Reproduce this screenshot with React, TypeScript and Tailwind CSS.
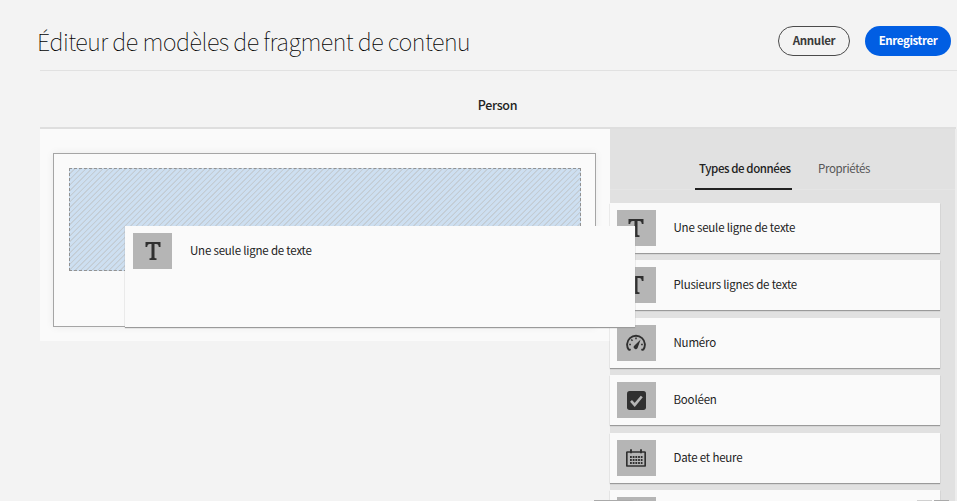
import React from "react";

const sans = "font-['Noto_Sans_CJK_SC','Noto_Sans',sans-serif]";

function TextIcon() {
  return (
    <svg width="16" height="18" viewBox="0 0 16 18" fill="#303030">
      <path d="M.5 0h15v5h-1.700c-.2-2.100-.8-3-2.600-3H9.500v13.200c0 .8.400 1 2 1V18h-7v-1.800c1.600 0 2-.2 2-1V2H4.800C3 2 2.400 2.900 2.200 5H.5z" />
    </svg>
  );
}

function GaugeIcon() {
  return (
    <svg width="20" height="18" viewBox="0 0 20 18" fill="none" stroke="#303030">
      <path d="M3 16.200A8.900 8.900 0 1 1 17 16.200M3 16.200l1.600-1M17 16.200l-1.600-1" strokeWidth="1.900" />
      <path d="M10 3.500v1.700M5.300 5.500l1.200 1.200M3.200 10.500h1.700M15.100 10.500h1.700" strokeWidth="1.500" />
      <path d="M14.600 5.500L11.700 13.800A2 2 0 1 1 8.500 11.600Z" fill="#303030" stroke="none" />
    </svg>
  );
}

function CheckIcon() {
  return (
    <svg width="19" height="19" viewBox="0 0 18 18">
      <rect width="18" height="18" rx="2.500" fill="#303030" />
      <path d="M3.800 9.300l3.500 3.900 6.700-8" fill="none" stroke="#b5b5b5" strokeWidth="2.500" />
    </svg>
  );
}

function CalendarIcon() {
  return (
    <svg width="20" height="18" viewBox="0 0 20 18" fill="none" stroke="#303030">
      <rect x=".8" y="3" width="18.400" height="14" rx=".6" strokeWidth="1.700" />
      <path d="M5 .3v4M15 .3v4" strokeWidth="1.900" />
      <path d="M4 8h12.500M4 11h12.500M4 14h12.500" strokeWidth="1.900" strokeDasharray="1.800 .9" />
    </svg>
  );
}

function Tile({ children }: { children?: React.ReactNode }) {
  return (
    <div className="flex h-9 w-[39px] shrink-0 items-center justify-center bg-[#b5b5b5]">
      {children}
    </div>
  );
}

const types = [
  { label: "Une seule ligne de texte", icon: <TextIcon /> },
  { label: "Plusieurs lignes de texte", icon: <TextIcon /> },
  { label: "Numéro", icon: <GaugeIcon /> },
  { label: "Booléen", icon: <CheckIcon /> },
  { label: "Date et heure", icon: <CalendarIcon /> },
  { label: "", icon: null },
];

export default function App() {
  return (
    <div className={`relative flex h-[501px] w-[957px] flex-col overflow-hidden bg-[#f3f3f3] text-[11.500px] tracking-[-0.200px] text-[#222] ${sans}`}>
      <header className="ml-10 flex h-[71px] shrink-0 items-start justify-between border-b border-[#e1e1e1] pr-1.5">
        <h1 className="-ml-[3px] mt-[25px] whitespace-nowrap text-[23.500px] font-thin leading-8 tracking-[-0.500px] text-black">
          Éditeur de modèles de fragment de contenu
        </h1>
        <div className="mt-[26px] flex gap-[15px] leading-none">
          <button className="h-[30px] w-[72px] rounded-full border-[1.5px] border-[#4b4b4b] font-bold tracking-[-0.300px] text-[#3a3a3a]">
            Annuler
          </button>
          <button className="h-[30px] w-[86px] rounded-full bg-[#015ee3] font-bold tracking-[-0.400px] text-white">Enregistrer</button>
        </div>
      </header>
      <div className="ml-10 flex h-[58px] w-[916px] shrink-0 items-center justify-center border-b-2 border-[#dedede] pr-px pt-[13px] text-[12.500px] font-medium tracking-[-0.350px]">
        Person
      </div>
      <main className="ml-10 flex min-h-0 flex-1">
        <section className="h-[212px] w-[570px] bg-[#fafafa] pl-[13px] pt-[24px]">
          <div className="h-[174px] w-[543px] border border-[#a5a5a5] pl-[15px] pt-[14px] shadow-[0_0_8px_#0001]">
            <div className="h-[103px] w-[512px] border border-dashed border-[#929292] bg-[repeating-linear-gradient(135deg,#cddff1_0px,#cddff1_2.4px,#c3ccd4_2.9px,#c3ccd4_3.5px,#cddff1_4px)]" />
          </div>
        </section>
        <aside className="w-[345px] bg-[#e1e1e1]">
          <nav className="flex h-[61px] items-end gap-[26px] border-b border-[#e5e5e5] pl-[85px]">
            <div className="-mb-px h-[39px] w-[97px] border-b-2 border-[#222] pl-1 pt-[7px] font-medium leading-5 tracking-[-0.420px]">
              <span className="whitespace-nowrap">Types de données</span>
            </div>
            <div className="h-[38px] pt-[7px] leading-5 tracking-[-0.350px] text-[#555]">Propriétés</div>
          </nav>
          <ul className="mt-[13px] flex flex-col gap-[7.400px]">
            {types.map((type, i) => (
              <li
                key={i}
                className="flex h-[50px] w-[330px] shrink-0 items-start bg-[#fafafa] pl-[6.500px] pt-[7px] shadow-[0_1px_1px_#9a9a9a]"
              >
                <Tile>{type.icon}</Tile>
                <span className="ml-[18px] mt-[7px] leading-5">{type.label}</span>
              </li>
            ))}
          </ul>
        </aside>
        <div className="h-full w-0.5 bg-[#ededed]" />
      </main>
      {/* Card being dragged over the drop zone */}
      <div className="absolute left-[125px] top-[226px] flex h-[101px] w-[510px] items-start bg-[#fafafa] pl-2 pt-[7px] shadow-[0_1px_1px_#9a9a9a]">
        <Tile>
          <TextIcon />
        </Tile>
        <span className="ml-[18px] mt-[7px] leading-5">Une seule ligne de texte</span>
      </div>
      <div className="absolute bottom-0 left-[594px] h-px w-[39px] bg-[#aaa]" />
      <div className="absolute bottom-0 left-[917px] h-px w-[15px] bg-[#d0d0d0]" />
      <div className="absolute bottom-0 left-[934px] h-px w-[15px] bg-[#aaa]" />
    </div>
  );
}
